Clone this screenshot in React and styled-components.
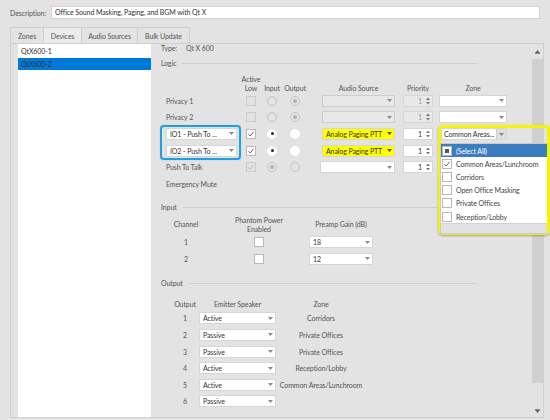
import React from 'react';
import styled, { createGlobalStyle } from 'styled-components';

const GlobalStyle = createGlobalStyle`
  html, body {
    margin: 0;
    padding: 0;
  }
  body {
    background: #e3e3e3;
    font-family: Lato, "Open Sans", sans-serif;
    font-size: 7px;
    letter-spacing: -0.1px;
    color: #444;
  }
`;

const Window = styled.div`
  width: 550px;
  height: 420px;
  box-sizing: border-box;
  padding: 6px 6px 2px 10px;
  display: flex;
  flex-direction: column;
`;

const DescRow = styled.div`
  display: flex;
  align-items: center;
  height: 13px;
  margin-right: 4px;
`;

const DescLabel = styled.span`
  width: 41px;
  flex: none;
  color: #555;
`;

const DescInput = styled.div`
  flex: 1;
  height: 13px;
  box-sizing: border-box;
  background: #fff;
  border: 1px solid #d2d2d2;
  padding-left: 3px;
  line-height: 11px;
  color: #333;
`;

const TabStrip = styled.div`
  display: flex;
  height: 16px;
  margin-top: 8px;
`;

const Tab = styled.div`
  box-sizing: border-box;
  width: ${(p) => p.$w}px;
  height: 16px;
  border-top: 1px solid #cfcfcf;
  border-right: 1px solid #cfcfcf;
  border-left: ${(p) => (p.$first ? '1px solid #cfcfcf' : 'none')};
  background: ${(p) => (p.$active ? '#ebebeb' : '#e3e3e3')};
  display: flex;
  align-items: center;
  justify-content: center;
  color: #555;
`;

const Panel = styled.div`
  flex: 1;
  min-height: 0;
  display: flex;
  border: 1px solid #cfcfcf;
`;

const ListPane = styled.div`
  width: 140px;
  flex: none;
  padding-left: 7px;
  box-sizing: border-box;
  display: flex;
`;

const DeviceList = styled.div`
  flex: 1;
  background: #fff;
  padding-top: 1px;
  display: flex;
  flex-direction: column;
`;

const DeviceItem = styled.div`
  height: 12.5px;
  line-height: 12.5px;
  padding-left: 3px;
  color: #333;
  background: ${(p) => (p.$selected ? '#0078d7' : 'transparent')};
`;

const Detail = styled.div`
  flex: 1;
  display: flex;
  min-width: 0;
`;

const Content = styled.div`
  flex: 1;
  padding-left: 10px;
  display: flex;
  flex-direction: column;
  align-items: flex-start;
`;

const TypeRow = styled.div`
  display: flex;
  height: 9px;
  line-height: 9px;
  color: #555;
`;

const TypeLabel = styled.span`
  width: 25px;
`;

const GroupHeader = styled.div`
  width: 316px;
  height: 10px;
  margin-top: ${(p) => p.$mt}px;
  display: flex;
  align-items: center;
  gap: 6px;
  color: #555;

  &::after {
    content: '';
    flex: 1;
    border-top: 1px solid #d0d0d0;
  }
`;

const LogicGrid = styled.div`
  position: relative;
  margin: 5.5px 0 0 2px;
  display: grid;
  grid-template-columns: 78px 20px 22px 24px 88px 38px 74px;
  grid-template-rows: 19px repeat(6, 16.6px);
  align-items: center;
`;

const InputGrid = styled.div`
  margin: 3px 0 0 2px;
  display: grid;
  grid-template-columns: 46px 100px 64px;
  grid-template-rows: 19px repeat(2, 16.5px);
  align-items: center;
  justify-items: center;
`;

const OutputGrid = styled.div`
  margin: 10px 0 0 2px;
  display: grid;
  grid-template-columns: 36px 77px 90px;
  grid-template-rows: 12px repeat(6, 16.6px);
  align-items: center;
  justify-items: center;
`;

const Head = styled.div`
  display: flex;
  flex-direction: column;
  align-items: center;
  align-self: ${(p) => p.$align || 'end'};
  line-height: 9px;
  padding-left: ${(p) => p.$pl || 0}px;
  white-space: nowrap;
  color: #555;
`;

const RowLabel = styled.div`
  padding-left: 3px;
  white-space: nowrap;
  color: #555;
`;

const Plain = styled.div`
  white-space: nowrap;
  color: #555;
  padding-left: ${(p) => p.$pl || 0}px;
`;

const CheckBox = styled.span`
  box-sizing: border-box;
  width: 10px;
  height: 10px;
  justify-self: center;
  display: flex;
  align-items: center;
  justify-content: center;
  border: 1px solid ${(p) => (p.$disabled ? '#cacaca' : '#b8b8b8')};
  background: ${(p) => (p.$disabled ? 'transparent' : '#fff')};
  flex: none;
`;

const RadioDot = styled.span`
  box-sizing: border-box;
  width: 10px;
  height: 10px;
  border-radius: 50%;
  justify-self: center;
  display: flex;
  align-items: center;
  justify-content: center;
  border: 1px solid ${(p) => (p.$disabled ? '#c6c6c6' : '#fff')};
  background: ${(p) => (p.$disabled ? 'transparent' : '#fff')};

  &::after {
    content: '';
    display: ${(p) => (p.$on ? 'block' : 'none')};
    width: ${(p) => (p.$disabled ? 4 : 3)}px;
    height: ${(p) => (p.$disabled ? 4 : 3)}px;
    border-radius: 50%;
    background: ${(p) => (p.$disabled ? '#b3b3b3' : '#2a2a2a')};
  }
`;

const comboBg = {
  white: '#fff',
  yellow: '#ffff00',
  disabled: '#e8e8e8',
};

const ComboBox = styled.div`
  box-sizing: border-box;
  width: ${(p) => p.$w}px;
  height: 12px;
  justify-self: ${(p) => p.$justify || 'start'};
  margin-left: ${(p) => p.$ml || 0}px;
  display: flex;
  align-items: center;
  border: 1px solid ${(p) => (p.$variant === 'disabled' ? '#cdcdcd' : '#d6d6d6')};
  background: ${(p) => comboBg[p.$variant] || '#fff'};
  color: #333;
  padding-left: ${(p) => (p.$open ? 2 : 3)}px;
`;

const ComboText = styled.span`
  flex: 1;
  min-width: 0;
  overflow: hidden;
  white-space: nowrap;
  line-height: 10px;
`;

const ComboButton = styled.span`
  width: ${(p) => (p.$open ? 9 : 10)}px;
  flex: none;
  align-self: stretch;
  display: flex;
  align-items: center;
  justify-content: center;
  background: ${(p) => (p.$open ? '#dedede' : 'transparent')};
  border-left: ${(p) => (p.$open ? '1px solid #cfcfcf' : 'none')};
`;

const SpinBox = styled.div`
  box-sizing: border-box;
  width: 30px;
  height: 12px;
  justify-self: end;
  display: flex;
  align-items: center;
  justify-content: flex-end;
  gap: 4px;
  padding-right: 2px;
  border: 1px solid #d6d6d6;
  background: ${(p) => (p.$disabled ? '#e8e8e8' : '#fff')};
  color: ${(p) => (p.$disabled ? '#999' : '#333')};
`;

const Focus = styled.div`
  position: absolute;
  left: -3px;
  top: 51.5px;
  width: 81px;
  height: 35px;
  box-sizing: border-box;
  border: 2.5px solid #1ca3df;
  border-radius: 4px;
  box-shadow: 0 0 1px rgba(28, 163, 223, 0.6);
  pointer-events: none;
`;

const PopupFrame = styled.div`
  position: absolute;
  left: 275px;
  top: 51.5px;
  width: 112px;
  height: 110px;
  box-sizing: border-box;
  border: 3px solid #f5f500;
  border-radius: 5px;
  box-shadow: 0 1px 2px rgba(0, 0, 0, 0.3);
  display: flex;
  flex-direction: column;
  z-index: 2;
`;

const DropList = styled.div`
  flex: 1;
  margin: 3px 0 0 -1px;
  background: #fff;
  border: 1px solid #c9c9c9;
  border-right: none;
  display: flex;
  flex-direction: column;
`;

const DropItem = styled.div`
  height: 13.2px;
  flex: none;
  display: flex;
  align-items: center;
  gap: 4px;
  padding-left: 1px;
  white-space: nowrap;
  background: ${(p) => (p.$selected ? '#3c7dbf' : 'transparent')};
  color: ${(p) => (p.$selected ? '#fff' : '#444')};
`;

const DropFooter = styled.div`
  margin-top: auto;
  height: 9px;
  background: #e1e1e1;
  border-top: 1px solid #d2d2d2;
`;

const Mixed = styled.span`
  width: 4px;
  height: 4px;
  background: #555;
`;

const Scrollbar = styled.div`
  width: 11px;
  flex: none;
  display: flex;
  flex-direction: column;
`;

const ScrollButton = styled.div`
  height: ${(p) => p.$h}px;
  display: flex;
  align-items: center;
  justify-content: center;
`;

const Track = styled.div`
  flex: 1;
`;

const Thumb = styled.div`
  height: 324px;
  background: #d0d0d0;
`;

function Caret({ color = '#7a7a7a' }) {
  return (
    <svg width="5" height="3" viewBox="0 0 5 3">
      <polygon points="0,0 5,0 2.5,3" fill={color} />
    </svg>
  );
}

function Tick({ color = '#555' }) {
  return (
    <svg width="8" height="8" viewBox="0 0 8 8">
      <path d="M1.5 4.2 L3.2 6 L6.6 1.8" stroke={color} strokeWidth="0.9" fill="none" />
    </svg>
  );
}

function SpinArrows() {
  return (
    <svg width="4" height="8" viewBox="0 0 4 8">
      <polygon points="0,3 4,3 2,0.5" fill="#777" />
      <polygon points="0,5 4,5 2,7.5" fill="#777" />
    </svg>
  );
}

function ArrowUp() {
  return (
    <svg width="5" height="4" viewBox="0 0 5 4">
      <polygon points="0,3 5,3 2.5,0" fill="#666" />
      <rect x="0" y="3" width="5" height="1" fill="#888" />
    </svg>
  );
}

function ArrowDown() {
  return (
    <svg width="5" height="4" viewBox="0 0 5 4">
      <rect x="0" y="0" width="5" height="1" fill="#888" />
      <polygon points="0,1 5,1 2.5,4" fill="#666" />
    </svg>
  );
}

function Combo({ text = '', variant = 'white', w, justify, ml, open }) {
  return (
    <ComboBox $variant={variant} $w={w} $justify={justify} $ml={ml} $open={open}>
      <ComboText>{text}</ComboText>
      <ComboButton $open={open}>
        <Caret color={variant === 'yellow' ? '#555' : '#8a8a8a'} />
      </ComboButton>
    </ComboBox>
  );
}

function Check({ disabled, checked }) {
  return (
    <CheckBox $disabled={disabled}>
      {checked && <Tick color={disabled ? '#b0b0b0' : '#555'} />}
    </CheckBox>
  );
}

function Spin({ disabled }) {
  return (
    <SpinBox $disabled={disabled}>
      <span>1</span>
      <SpinArrows />
    </SpinBox>
  );
}

const zones = [
  'Common Areas/Lunchroom',
  'Corridors',
  'Open Office Masking',
  'Private Offices',
  'Reception/Lobby',
];

const outputs = [
  { n: 1, mode: 'Active', zone: 'Corridors' },
  { n: 2, mode: 'Passive', zone: 'Private Offices' },
  { n: 3, mode: 'Passive', zone: 'Private Offices' },
  { n: 4, mode: 'Active', zone: 'Reception/Lobby' },
  { n: 5, mode: 'Active', zone: 'Common Areas/Lunchroom' },
  { n: 6, mode: 'Passive', zone: '' },
];

function PrivacyRow({ label }) {
  return (
    <>
      <RowLabel>{label}</RowLabel>
      <Check disabled />
      <RadioDot $disabled />
      <RadioDot $disabled $on />
      <Combo variant="disabled" w={73} justify="end" />
      <Spin disabled />
      <Combo w={68} justify="end" />
    </>
  );
}

function PagingRow({ io }) {
  return (
    <>
      <Combo text={`${io} - Push To ...`} w={71} ml={3} />
      <Check checked />
      <RadioDot $on />
      <RadioDot />
      <Combo text="Analog Paging PTT" variant="yellow" w={73} justify="end" />
      <Spin />
      <span />
    </>
  );
}

function ZonePicker() {
  return (
    <PopupFrame>
      <Combo text="Common Areas..." w={66} open />
      <DropList>
        <DropItem $selected>
          <CheckBox>
            <Mixed />
          </CheckBox>
          (Select All)
        </DropItem>
        {zones.map((z, i) => (
          <DropItem key={z}>
            <Check checked={i === 0} />
            {z}
          </DropItem>
        ))}
        <DropFooter />
      </DropList>
    </PopupFrame>
  );
}

export default function App() {
  return (
    <>
      <GlobalStyle />
      <Window>
        <DescRow>
          <DescLabel>Description:</DescLabel>
          <DescInput>Office Sound Masking, Paging, and BGM with Qt X</DescInput>
        </DescRow>

        <TabStrip>
          <Tab $w={34} $first>Zones</Tab>
          <Tab $w={38} $active>Devices</Tab>
          <Tab $w={56}>Audio Sources</Tab>
          <Tab $w={52}>Bulk Update</Tab>
        </TabStrip>

        <Panel>
          <ListPane>
            <DeviceList>
              <DeviceItem>QtX600-1</DeviceItem>
              <DeviceItem $selected>QtX600-2</DeviceItem>
            </DeviceList>
          </ListPane>

          <Detail>
            <Content>
              <TypeRow>
                <TypeLabel>Type:</TypeLabel>
                <span>Qt X 600</span>
              </TypeRow>

              <GroupHeader $mt={5}>Logic</GroupHeader>
              <LogicGrid>
                <span />
                <Head>
                  <span>Active</span>
                  <span>Low</span>
                </Head>
                <Head>Input</Head>
                <Head>Output</Head>
                <Head $pl={15}>Audio Source</Head>
                <Head $pl={8}>Priority</Head>
                <Head $pl={6}>Zone</Head>

                <PrivacyRow label="Privacy 1" />
                <PrivacyRow label="Privacy 2" />
                <PagingRow io="IO1" />
                <PagingRow io="IO2" />

                <RowLabel>Push To Talk</RowLabel>
                <Check disabled checked />
                <RadioDot $disabled $on />
                <RadioDot $disabled />
                <Combo w={75} justify="end" />
                <Spin />
                <span />

                <RowLabel>Emergency Mute</RowLabel>

                <Focus />
                <ZonePicker />
              </LogicGrid>

              <GroupHeader $mt={10}>Input</GroupHeader>
              <InputGrid>
                <Head $align="center">Channel</Head>
                <Head $align="center">
                  <span>Phantom Power</span>
                  <span>Enabled</span>
                </Head>
                <Head $align="center">Preamp Gain (dB)</Head>

                <Plain>1</Plain>
                <Check />
                <Combo text="18" w={64} />

                <Plain>2</Plain>
                <Check />
                <Combo text="12" w={64} />
              </InputGrid>

              <GroupHeader $mt={11}>Output</GroupHeader>
              <OutputGrid>
                <Head $align="center" $pl={8}>Output</Head>
                <Head $align="center">Emitter Speaker</Head>
                <Head $align="center">Zone</Head>
                {outputs.map((o) => (
                  <React.Fragment key={o.n}>
                    <Plain $pl={8}>{o.n}</Plain>
                    <Combo text={o.mode} w={77} />
                    <Plain>{o.zone}</Plain>
                  </React.Fragment>
                ))}
              </OutputGrid>
            </Content>

            <Scrollbar>
              <ScrollButton $h={15}>
                <ArrowUp />
              </ScrollButton>
              <Track>
                <Thumb />
              </Track>
              <ScrollButton $h={12}>
                <ArrowDown />
              </ScrollButton>
            </Scrollbar>
          </Detail>
        </Panel>
      </Window>
    </>
  );
}
